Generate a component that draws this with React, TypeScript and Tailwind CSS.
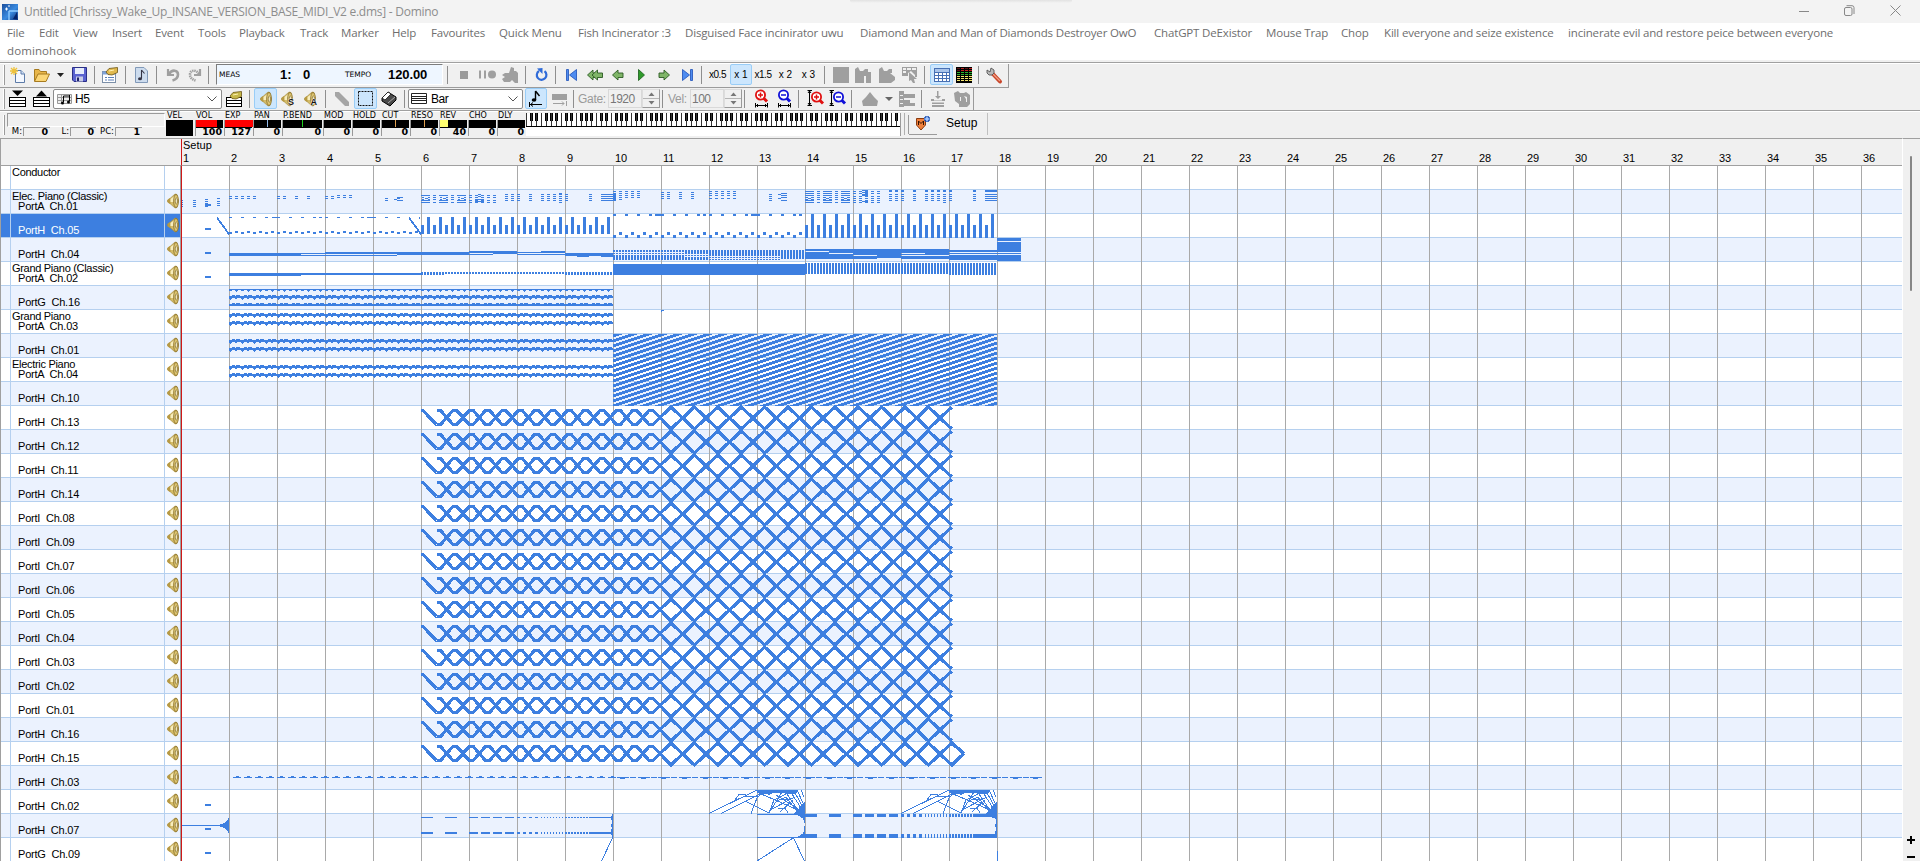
import React from "react";

type Box = [number, number, number, number];

const BLUE = "#3d7fe0";
const BAR = 48;

/* ---------- small building blocks ---------- */

const Cell = ({ c, children }: { c: string; children?: React.ReactNode }) => (
  <div className={`flex h-full shrink-0 items-center justify-center ${c}`}>{children}</div>
);

const Sep = ({ c }: { c: string }) => (
  <Cell c={c}>
    <div className="h-[18px] w-px bg-[#8e8e8e]" />
  </Cell>
);

const Hot = ({ c, children }: { c: string; children?: React.ReactNode }) => (
  <div className={`flex h-[21px] shrink-0 items-center justify-center rounded-[2px] border border-[#99cdf7] bg-[#cce6fd] ${c}`}>
    {children}
  </div>
);

const Svg = ({ w = 16, h = 16, children }: { w?: number; h?: number; children: React.ReactNode }) => (
  <svg width={w} height={h} viewBox={`0 0 ${w} ${h}`} className="block shrink-0 overflow-visible">
    {children}
  </svg>
);

const Grip = () => (
  <div className="flex h-full w-[6px] shrink-0 items-center pl-[3px]">
    <div className="h-[20px] w-[2px] border-r border-[#9b9b9b] bg-white" />
  </div>
);

const Speaker = ({ mark }: { mark?: string }) => (
  <div className="relative shrink-0">
    <Svg w={mark ? 15 : 12} h={16}>
      <path d="M0.500 7L3.500 5L8 1L10 1.500L11.500 8L10 14.500L8 15L3.500 11L0.500 9Z" fill="#d3bb68" stroke="#a08432" strokeWidth="0.600" />
      <path d="M1 6.500L3.500 5V11L1 9.500Z" fill="#b89a42" />
      <path d="M3.500 6L7.500 3V9L3.500 9Z" fill="#f8edbc" />
      <ellipse cx="9" cy="8" rx="2.400" ry="6.600" fill="#dcc470" stroke="#7d6320" strokeWidth="0.700" />
      <ellipse cx="9.300" cy="8" rx="1.100" ry="3" fill="#fff6cf" stroke="#665016" strokeWidth="0.600" />
    </Svg>
    {mark && (
      <span className="absolute top-[5px] left-[7px] font-['Liberation_Sans',sans-serif] text-[9px] leading-[12px] font-bold text-[#111] [text-shadow:0_0_1px_#fff,0_0_1px_#fff,0_0_2px_#fff]">
        {mark}
      </span>
    )}
  </div>
);

const Hand = ({ list }: { list?: boolean }) => (
  <Svg>
    {list ? (
      <g shapeRendering="crispEdges">
        <rect x="0" y="6" width="16" height="10" fill="#000" />
        <rect x="1" y="7" width="14" height="2" fill="#fff" />
        <rect x="1" y="10" width="14" height="2" fill="#fff" />
        <rect x="1" y="13" width="14" height="2" fill="#fff" />
      </g>
    ) : (
      <g>
        <rect x="0.5" y="4.5" width="13" height="11" fill="#fff" stroke="#7b8fa8" />
        <rect x="0.5" y="4.5" width="13" height="3" fill="#7ea2d8" />
        <path d="M3 10.5h2M6 10.5h6M3 13h2M6 13h6" stroke="#5a7fb8" />
      </g>
    )}
    <path d="M4 5 L7 1.5 L15.5 0.5 L15.5 5.5 L10 8 L6 7.5 Z" fill={list ? "#c6b84a" : "#e0b94e"} stroke="#6b5414" strokeWidth="0.8" />
    <path d="M7 4 L12 3" stroke="#fff0b0" />
  </Svg>
);

const ListArrow = ({ up }: { up?: boolean }) => (
  <Svg w={17} h={17}>
    <path d={up ? "M3 6.5 L8.5 0.5 L14 6.5 Z" : "M3 0.5 L8.5 6 L14 0.5 Z"} fill="#000" />
    <g shapeRendering="crispEdges">
      <rect x="0" y="7" width="17" height="10" fill="#000" />
      <rect x="1" y="8" width="15" height="2" fill="#fff" />
      <rect x="1" y="11" width="15" height="2" fill="#fff" />
      <rect x="1" y="14" width="15" height="2" fill="#fff" />
    </g>
  </Svg>
);

const Lens = ({ color, minus, vertical }: { color: string; minus?: boolean; vertical?: boolean }) => (
  <Svg w={17} h={17}>
    {vertical ? (
      <path d="M2.5 0.5V15.5M0.5 0.5H5M0.5 15.5H5M1 3L2.5 1L4 3M1 13L2.5 15L4 13" stroke="#000" fill="none" strokeWidth="1" />
    ) : (
      <path d="M2.5 13V17.5M14.5 13V17.5M3 15.5H14M5 14L3.5 15.5L5 17M12 14L13.5 15.5L12 17" stroke="#000" fill="none" strokeWidth="1" />
    )}
    <g transform={vertical ? "translate(2 1)" : "translate(0 -1)"}>
      <path d="M10.5 9L14 12.5" stroke={color} strokeWidth="3" />
      <circle cx="7.5" cy="6" r="4.6" fill="#fff" stroke={color} strokeWidth="1.8" />
      <path d={minus ? "M5 6H10" : "M5 6H10M7.5 3.5V8.5"} stroke={color} strokeWidth="1.5" />
    </g>
  </Svg>
);

const Arrow = ({ left, double }: { left?: boolean; double?: boolean }) => (
  <Svg w={double ? 16 : 12} h={12}>
    <g transform={left ? undefined : "translate(12 0) scale(-1 1)"} fill="#7fb568" stroke="#2a5a22" strokeWidth="0.9" strokeLinejoin="round">
      <path d="M0.5 6L6 1V4H11V8.5H6V11Z" />
      {double && <path d="M5 6L10.5 1V4H15.5V8.5H10.5V11Z" />}
    </g>
  </Svg>
);

const Chevron = () => (
  <Svg w={10} h={6}>
    <path d="M0.5 0.5L5 5L9.5 0.5" fill="none" stroke="#555" />
  </Svg>
);

const Spin = () => (
  <div className="flex h-[19px] w-[18px] shrink-0 flex-col border border-t-[#ddd] border-r-[#999] border-b-[#999] border-l-[#ddd] bg-[#f0f0f0]">
    <div className="flex flex-1 items-center justify-center border-b border-[#b5b5b5]">
      <Svg w={7} h={4}><path d="M0.500 4L3.500 0.500L6.500 4Z" fill="#777" /></Svg>
    </div>
    <div className="flex flex-1 items-center justify-center">
      <Svg w={7} h={4}><path d="M0.500 0L3.500 3.500L6.500 0Z" fill="#777" /></Svg>
    </div>
  </div>
);

/* ---------- title and menu ---------- */

const MENU: [string, string][] = [
  ["File", "w-[32px]"], ["Edit", "w-[34px]"], ["View", "w-[39px]"], ["Insert", "w-[43px]"], ["Event", "w-[43px]"],
  ["Tools", "w-[41px]"], ["Playback", "w-[61px]"], ["Track", "w-[41px]"], ["Marker", "w-[51px]"], ["Help", "w-[39px]"],
  ["Favourites", "w-[68px]"], ["Quick Menu", "w-[79px]"], ["Fish Incinerator :3", "w-[107px]"],
  ["Disguised Face incinirator uwu", "w-[175px]"], ["Diamond Man and Man of Diamonds Destroyer OwO", "w-[294px]"],
  ["ChatGPT DeExistor", "w-[112px]"], ["Mouse Trap", "w-[75px]"], ["Chop", "w-[43px]"],
  ["Kill everyone and seize existence", "w-[184px]"], ["incinerate evil and restore peice between everyone", "w-[270px]"],
];

const TitleBar = () => (
  <div className="flex h-[23px] w-full shrink-0 items-center bg-[#f3f3f3] font-['Open_Sans',sans-serif] text-[12px] text-[#8d8d8d]">
    <div className="ml-[2px] w-[22px]">
      <Svg>
        <defs>
          <linearGradient id="app" x1="0" y1="0" x2="1" y2="1">
            <stop offset="0" stopColor="#1c4f9c" /><stop offset="0.55" stopColor="#3a8be0" /><stop offset="1" stopColor="#0a2f78" />
          </linearGradient>
        </defs>
        <rect width="16" height="16" fill="url(#app)" />
        <path d="M7 7h9M7 7v9" stroke="#8ecbff" strokeWidth="1.4" />
        <path d="M3 5h3M4.5 3.500v3M6 2h2" stroke="#fff" />
        <path d="M11 15L15 8V15Z" fill="#04246b" />
      </Svg>
    </div>
    <div className="w-[826px] whitespace-nowrap tracking-[-0.260px]">Untitled [Chrissy_Wake_Up_INSANE_VERSION_BASE_MIDI_V2 e.dms] - Domino</div>
    <div className="h-[3px] w-[222px] self-start rounded-b-full bg-linear-to-b from-[#e2e2e2] to-[#f3f3f3]" />
    <div className="ml-auto flex items-center pr-[19px] pb-[2px]">
      <Svg w={10} h={10}><path d="M0 5.500h10" stroke="#888" /></Svg>
      <div className="w-[35px]" />
      <Svg w={11} h={11}><rect x="0.5" y="2.500" width="7.500" height="8" rx="1.500" fill="none" stroke="#888" /><path d="M2.500 0.700H8a2 2 0 0 1 2 2V9" fill="none" stroke="#888" /></Svg>
      <div className="w-[35px]" />
      <Svg w={11} h={11}><path d="M0.500 0.500L10.500 10.500M10.500 0.500L0.500 10.500" stroke="#888" /></Svg>
    </div>
  </div>
);

const MenuBar = () => (
  <div className="h-[37px] w-full shrink-0 bg-white pl-[7px] font-['Open_Sans',sans-serif] text-[11.5px] tracking-[-0.160px] text-[#6e6e6e]">
    <div className="flex h-[19px] items-center">
      {MENU.map(([t, w]) => (
        <div key={t} className={`shrink-0 whitespace-nowrap ${w}`}>{t}</div>
      ))}
    </div>
    <div className="flex h-[18px] items-center tracking-[0.1px]">dominohook</div>
  </div>
);

/* ---------- toolbars ---------- */

const Gray = ({ d }: { d: string }) => (
  <Svg><path d={d} fill="#9f9f9f" fillRule="evenodd" /></Svg>
);

const Eq = () => {
  const cells: React.ReactNode[] = [];
  const on = [5, 7, 6, 7];
  for (let c = 0; c < 4; c++)
    for (let r = 0; r < 7; r++)
      cells.push(
        <rect key={`${c}-${r}`} x={1 + c * 4} y={1 + r * 2} width="3" height="1"
          fill={r < 7 - on[c] ? "#5a1010" : r < 2 ? "#c02020" : r < 4 ? "#2fb02f" : "#f3e36a"} />
      );
  return <Svg><rect width="16" height="16" fill="#000" />{cells}</Svg>;
};

const TransportBar = () => (
  <div className="flex h-[24px] w-[1009px] shrink-0 items-center border-r border-b border-[#9b9b9b] bg-[#f0f0f0] pb-[2px] font-['Liberation_Sans',sans-serif] text-[11px] text-black">
    <Grip />
    <Cell c="w-[24px]">
      <Svg>
        <path d="M5.500 3.500H11L14.500 7V15.500H5.500Z" fill="#f4f8ff" stroke="#5c7ba8" />
        <path d="M11 3.500V7H14.500" fill="#cfe0f7" stroke="#5c7ba8" />
        <path d="M4 0V8M0 4H8M1 1L7 7M7 1L1 7" stroke="#eec23c" strokeWidth="1.300" />
      </Svg>
    </Cell>
    <Cell c="w-[24px]">
      <Svg>
        <path d="M0.500 14V2.500H5L6.500 4.500H12.500V7" fill="#e8b64a" stroke="#a77b20" />
        <path d="M0.500 14.500L4 7H15.500L12 14.500Z" fill="#fbd676" stroke="#a77b20" />
      </Svg>
    </Cell>
    <Cell c="w-[13px]"><Svg w={7} h={4}><path d="M0 0H7L3.500 4Z" fill="#222" /></Svg></Cell>
    <Cell c="w-[24px]">
      <Svg w={15} h={15}>
        <path d="M0.500 0.500H14.500V14.500H2L0.500 13Z" fill="#5a62d0" stroke="#2a2f86" />
        <rect x="3" y="1" width="9" height="6" fill="#e6ecfb" />
        <rect x="4" y="9.500" width="7" height="5" fill="#c8cce6" />
        <rect x="5" y="10.500" width="2" height="3.500" fill="#20246c" />
      </Svg>
    </Cell>
    <Sep c="w-[7px]" />
    <Cell c="w-[24px]"><Hand /></Cell>
    <Sep c="w-[6px]" />
    <Cell c="w-[26px]">
      <Svg w={13} h={16}>
        <path d="M0.500 0.500H9L12.500 4V15.500H0.500Z" fill="#cddcee" stroke="#8199b8" />
        <path d="M6.500 3V11.500M6.500 3L9.500 6.500" stroke="#334" strokeWidth="1.100" />
        <ellipse cx="5" cy="11.800" rx="2" ry="1.500" fill="#334" />
      </Svg>
    </Cell>
    <Sep c="w-[4px]" />
    <Cell c="w-[30px]">
      <Svg w={13} h={14}><path d="M1 1V7H7" fill="none" stroke="#9f9f9f" strokeWidth="2.200" /><path d="M2 6C5 1 11 2 11 6.500C11 9.500 9 11.500 5.500 12.500" fill="none" stroke="#9f9f9f" strokeWidth="2.600" /></Svg>
    </Cell>
    <Cell c="w-[12px]">
      <Svg w={13} h={14}><g transform="translate(13 0) scale(-1 1)"><path d="M1 1V7H7" fill="none" stroke="#9f9f9f" strokeWidth="2.200" /><path d="M2 6C5 1 11 2 11 6.500C11 9.500 9 11.500 5.500 12.500" fill="none" stroke="#9f9f9f" strokeWidth="2.600" strokeDasharray="1.500 0.700" /></g></Svg>
    </Cell>
    <Sep c="w-[16px]" />
    <div className="flex h-[21px] w-[227px] shrink-0 items-center border border-t-[#7d7d7d] border-r-white border-b-white border-l-[#7d7d7d] bg-[#eef6ff] text-[13px] font-bold">
      <div className="w-[60px] pl-[2px] font-['DejaVu_Sans',sans-serif] text-[7.5px] font-normal">MEAS</div>
      <div className="w-[26px] pl-[3px]">1:</div>
      <div className="w-[42px]">0</div>
      <div className="w-[43px] font-['DejaVu_Sans',sans-serif] text-[7.5px] font-normal">TEMPO</div>
      <div className="tracking-[-0.1px]">120.00</div>
    </div>
    <Sep c="w-[9px]" />
    <Cell c="w-[24px]"><div className="size-[8px] bg-[#9a9a9a]" /></Cell>
    <Cell c="w-[22px]"><Svg w={17} h={9}><path d="M0 0.500H2V8.500H0ZM5 0.500H7V8.500H5Z" fill="#9f9f9f" /><circle cx="13" cy="4.500" r="4" fill="#9f9f9f" /></Svg></Cell>
    <Cell c="w-[24px]"><Gray d="M9 0L12 1V4H14L16 6V16H13L10 13L8 15H2L0 12L3 10L0 8L3 6H7Z" /></Cell>
    <Sep c="w-[7px]" />
    <Cell c="w-[24px]">
      <Svg w={13} h={13}><path d="M9.500 3.200A4.800 4.800 0 1 1 4 3" fill="none" stroke="#2f6bd8" strokeWidth="2.200" /><path d="M7 0V6L1.500 0.500Z" fill="#2f6bd8" transform="translate(0.500 0)" /></Svg>
    </Cell>
    <Sep c="w-[5px]" />
    <Cell c="w-[26px]"><Svg w={11} h={12}><path d="M0.500 0.500H2.500V11.500H0.500ZM10.500 0.500V11.500L3.500 6Z" fill="#4f8cf0" stroke="#1d4fb8" strokeWidth="0.800" /></Svg></Cell>
    <Cell c="w-[22px]"><Arrow left double /></Cell>
    <Cell c="w-[24px]"><Arrow left /></Cell>
    <Cell c="w-[22px]"><Svg w={7} h={12}><path d="M0.500 0.500L6.500 6L0.500 11.500Z" fill="#2f9a2a" stroke="#175a18" strokeWidth="0.800" /></Svg></Cell>
    <Cell c="w-[24px]"><Arrow /></Cell>
    <Cell c="w-[22px]"><Svg w={11} h={12}><path d="M8.500 0.500H10.500V11.500H8.500ZM0.500 0.500V11.500L7.500 6Z" fill="#4f8cf0" stroke="#1d4fb8" strokeWidth="0.800" /></Svg></Cell>
    <Sep c="w-[7px]" />
    <Cell c="w-[25px] text-[10px] tracking-[-0.500px]">x0.5</Cell>
    <Hot c="w-[22px] text-[10px]">x 1</Hot>
    <Cell c="w-[22px] text-[10px] tracking-[-0.500px]">x1.5</Cell>
    <Cell c="w-[23px] text-[10px]">x 2</Cell>
    <Cell c="w-[23px] text-[10px]">x 3</Cell>
    <Sep c="w-[8px]" />
    <Cell c="w-[26px]"><Gray d="M0 0H16V16H0Z" /></Cell>
    <Cell c="w-[18px]"><Gray d="M0 2L3 0L5 4H8L10 2H13V5H16V16H11V9H9V16H0Z" /></Cell>
    <Cell c="w-[30px]"><Gray d="M0 2L3 0L5 4H8L10 2H13V6H11L16 10V13L12 16H0Z" /></Cell>
    <Cell c="w-[16px]"><Gray d="M0 0H15V10H13V8L9 4L6 6V9H0ZM1 1V3H4V1ZM5 1V3H9V1ZM10 1V3H14V1ZM1 4V6H4V4ZM7 5L15 12L12 12L13 16L11 16L9 13L7 14Z" /></Cell>
    <Sep c="w-[12px]" />
    <Hot c="w-[23px]">
      <Svg w={16} h={14}>
        <rect x="0.500" y="0.500" width="15" height="13" fill="#fff" stroke="#4770b4" />
        <rect x="1" y="1" width="14" height="3" fill="#a9c4ea" />
        <path d="M1 4.500H15M1 7.500H15M1 10.500H15M4.500 4V13M8.500 4V13M12.500 4V13" stroke="#4770b4" />
      </Svg>
    </Hot>
    <Cell c="w-[22px]"><Eq /></Cell>
    <Sep c="w-[7px]" />
    <Cell c="w-[24px]">
      <Svg>
        <path d="M6 6L14 14.500" stroke="#c8452a" strokeWidth="4" strokeLinecap="round" />
        <path d="M7 7L14 14" stroke="#f2a084" strokeWidth="1.200" />
        <path d="M1 3L4 5L5 1L8 3L8 6L6 8L3 8L1 6Z" fill="#b9b9b9" stroke="#555" strokeWidth="0.900" />
      </Svg>
    </Cell>
  </div>
);

const EditBar = () => (
  <div className="flex h-[22px] w-[974px] shrink-0 items-center border-r border-[#9b9b9b] bg-[#f0f0f0] pb-px font-['Liberation_Sans',sans-serif] text-[12px] text-black">
    <Grip />
    <Cell c="w-[23px]"><ListArrow /></Cell>
    <Cell c="w-[24px]"><ListArrow up /></Cell>
    <div className="flex h-[20px] w-[169px] shrink-0 items-center rounded-[2px] border border-[#8c8c8c] bg-white pr-[4px] pl-[3px]">
      <Svg w={15} h={12}>
        <path d="M0.500 1.500H14.500V10.500H0.500ZM0 4.500H15M0 7.500H15M4.500 1V11" fill="#eee" stroke="#999" />
        <path d="M6.500 3V9M12.500 2V8M6.500 3H12.500" stroke="#000" fill="none" /><circle cx="5.500" cy="10" r="1.500" /><circle cx="11.500" cy="9" r="1.500" />
      </Svg>
      <div className="flex-1 pl-[3px] tracking-[-0.300px]">H5</div>
      <Chevron />
    </div>
    <Cell c="w-[24px]"><Hand list /></Cell>
    <Sep c="mr-[2px] w-[6px]" />
    <Hot c="w-[23px]"><Speaker /></Hot>
    <Cell c="w-[23px]"><Speaker mark="S" /></Cell>
    <Cell c="w-[22px]"><Speaker mark="A" /></Cell>
    <Sep c="w-[7px]" />
    <Cell c="w-[25px]"><Svg w={14} h={14}><path d="M0 0L4 0L14 10V14H10L0 4Z" fill="#a5a5a5" /></Svg></Cell>
    <Hot c="w-[23px]"><Svg w={15} h={15}><rect x="0.500" y="0.500" width="14" height="14" fill="none" stroke="#111" strokeDasharray="2 1" /></Svg></Hot>
    <Cell c="w-[24px]">
      <Svg>
        <path d="M1 7L7 1L15 6L15 9L9 15L1 10Z" fill="#4a4a4a" stroke="#000" />
        <path d="M1 7L7 1L10 3L4 9Z" fill="#fff" stroke="#000" strokeWidth="0.700" />
        <path d="M7 12L14 6" stroke="#aaa" strokeWidth="1" />
      </Svg>
    </Cell>
    <Sep c="mr-px w-[6px]" />
    <div className="flex h-[20px] w-[115px] shrink-0 items-center rounded-[2px] border border-[#8c8c8c] bg-white pr-[4px] pl-[2px]">
      <Svg w={16} h={11}><path d="M0.500 0.500H15.500V10.500H0.500ZM0 3.500H16M0 5.500H16M0 7.500H16" fill="#fff" stroke="#222" /></Svg>
      <div className="flex-1 pl-[4px] tracking-[-0.500px]">Bar</div>
      <Chevron />
    </div>
    <Hot c="ml-[2px] w-[22px]">
      <Svg w={14} h={16}><path d="M6.500 0V9M6.500 0L10.500 5" stroke="#000" strokeWidth="1.400" /><ellipse cx="5" cy="9" rx="2.300" ry="1.800" /><path d="M0.500 11V16M1 13.500H13M4 11.500L1.500 13.500L4 15.500" stroke="#000" fill="none" /></Svg>
    </Hot>
    <Cell c="w-[24px]"><Svg w={15} h={14}><path d="M0 2H15V8H0Z" fill="#9f9f9f" /><path d="M1 11.500H12M14.500 9V14M10 9.500L12 11.500L10 13.500" stroke="#9f9f9f" fill="none" /></Svg></Cell>
    <Sep c="w-[4px]" />
    <div className="w-[33px] shrink-0 pl-[3px] tracking-[-0.300px] text-[#9a9a9a]">Gate:</div>
    <div className="flex h-[19px] w-[34px] shrink-0 items-center border border-[#d9d9d9] pl-[1px] tracking-[-0.500px] text-[#777]">1920</div>
    <Spin />
    <Sep c="w-[5px]" />
    <div className="w-[25px] shrink-0 pl-[3px] tracking-[-0.300px] text-[#9a9a9a]">Vel:</div>
    <div className="flex h-[19px] w-[34px] shrink-0 items-center border border-[#d9d9d9] pl-[1px] tracking-[-0.500px] text-[#777]">100</div>
    <Spin />
    <Sep c="w-[5px]" />
    <Cell c="w-[28px]"><Lens color="#e01010" /></Cell>
    <Cell c="w-[18px]"><Lens color="#1010d8" minus /></Cell>
    <Sep c="w-[10px]" />
    <Cell c="w-[24px]"><Lens color="#e01010" vertical /></Cell>
    <Cell c="w-[20px]"><Lens color="#1010d8" minus vertical /></Cell>
    <Sep c="w-[9px]" />
    <Cell c="w-[28px]"><Svg w={16} h={14}><path d="M8 0L12 5L16 9L15 14H1L0 9L4 5Z" fill="#9f9f9f" /></Svg></Cell>
    <Cell c="w-[10px]"><Svg w={8} h={4}><path d="M0 0H8L4 4Z" fill="#666" /></Svg></Cell>
    <Cell c="w-[26px]"><Svg><path d="M0 0H5V3H16V7H5V9H11V12H16V15H5V16H0ZM1 4V5H4V4ZM1 8V9H4V8ZM1 12V13H4V12Z" fill="#9f9f9f" fillRule="evenodd" /></Svg></Cell>
    <Sep c="w-[3px]" />
    <Cell c="w-[30px]"><Svg w={14} h={16}><path d="M6 0H7.500V5H10L7 8L4 5H6ZM0 8H3V9.500H11V8H14V10H0ZM1 11.500H13V13H1ZM1 14H13V16H1Z" fill="#9f9f9f" /></Svg></Cell>
    <Cell c="w-[18px]"><Gray d="M0 2L4 0L6 2H10L12 1L16 4V13L13 16H5V13L1 10ZM6 6V10H7V6ZM10 5L12 8V11H13V6Z" /></Cell>
  </div>
);

type Ctl = { name: string; w: string; value?: string; fill?: string };
const CONTROLS: Ctl[] = [
  { name: "VOL", w: "w-[29px]", value: "100", fill: "left-0 w-[21px] bg-[#ff0000]" },
  { name: "EXP", w: "w-[29px]", value: "127", fill: "left-0 w-[28px] bg-[#ff0000]" },
  { name: "PAN", w: "w-[29px]", value: "0", fill: "left-[13px] w-px bg-[#8fb8e8]" },
  { name: "P.BEND", w: "w-[41px]", value: "0", fill: "left-[19px] w-px bg-[#20d020]" },
  { name: "MOD", w: "w-[29px]", value: "0" },
  { name: "HOLD", w: "w-[29px]", value: "0" },
  { name: "CUT", w: "w-[29px]", value: "0", fill: "left-[13px] w-px bg-[#e0a050]" },
  { name: "RESO", w: "w-[29px]", value: "0", fill: "left-[13px] w-px bg-[#e0a050]" },
  { name: "REV", w: "w-[29px]", value: "40", fill: "left-0 w-[8px] bg-[#ffff70]" },
  { name: "CHO", w: "w-[29px]", value: "0" },
  { name: "DLY", w: "w-[29px]", value: "0" },
];

const Piano = () => {
  const nodes: React.ReactNode[] = [];
  for (let i = 0; i < 75; i++) {
    nodes.push(<rect key={`w${i}`} x={i * 5} y="0" width="1" height="13" fill="#333" />);
    if ([0, 1, 3, 4, 5].includes(i % 7) && i < 74)
      nodes.push(<rect key={`b${i}`} x={i * 5 + 4} y="0" width="3" height="8" fill="#000" />);
  }
  return (
    <svg width="375" height="23" className="block" shapeRendering="crispEdges">
      <rect width="375" height="23" fill="#fff" />
      {nodes}
      <rect x="0" y="13" width="375" height="1" fill="#000" />
      <rect x="374" y="0" width="1" height="23" fill="#9b9b9b" />
    </svg>
  );
};

const Field = ({ label, value, lw, w }: { label: string; value: string; lw: string; w: string }) => (
  <>
    <div className={`shrink-0 text-right font-['DejaVu_Sans',sans-serif] text-[8.5px] leading-[9px] ${lw}`}>{label}</div>
    <div className={`flex h-[9px] shrink-0 items-center justify-end border-t border-l border-[#999] pr-[2px] font-['DejaVu_Sans',sans-serif] text-[9.5px] font-bold ${w}`}>
      <span className="leading-[8px]">{value}</span>
    </div>
  </>
);

const StatusBar = () => (
  <div className="flex h-[24px] w-full shrink-0 bg-[#f0f0f0] pt-px text-black">
    <Grip />
    <div className="ml-px w-[159px] shrink-0">
      <div className="h-[14px] w-[158px] border border-[#9b9b9b] border-r-white border-b-white" />
      <div className="flex h-[9px] items-center">
        <Field label="M:" value="0" lw="w-[15px] mr-[1px]" w="w-[27px]" />
        <Field label="L:" value="0" lw="w-[19px] mr-[1px]" w="w-[26px]" />
        <Field label="PC:" value="1" lw="w-[18px] mr-[1px]" w="w-[27px]" />
      </div>
    </div>
    <div className="w-[29px] shrink-0 font-['DejaVu_Sans',sans-serif] text-[8px] leading-[6px]">
      <div className="h-[7px] pl-px">VEL</div>
      <div className="h-[16px] w-[27px] bg-black" />
    </div>
    {CONTROLS.map((c) => (
      <div key={c.name} className={`shrink-0 pr-px font-['DejaVu_Sans',sans-serif] ${c.w}`}>
        <div className="h-[7px] pl-px text-[8px] leading-[6px]">{c.name}</div>
        <div className="relative h-[8px] w-full border-l border-[#999] bg-black">
          {c.fill && <div className={`absolute top-0 h-[7px] ${c.fill}`} />}
        </div>
        <div className="flex h-[8px] items-center justify-end border-l border-[#999] pr-[1px] text-[9.5px] font-bold">
          <span className="leading-[8px]">{c.value}</span>
        </div>
      </div>
    ))}
    <div className="w-[378px] shrink-0"><Piano /></div>
    <div className="flex h-[22px] items-center border-r border-l border-r-[#c0c0c0] border-l-[#b0b0b0] pr-[10px] font-['Liberation_Sans',sans-serif] text-[12px]">
      <div className="h-[19px] w-[4px] border-r border-[#9b9b9b]" />
      <div className="flex h-[21px] w-[28px] items-center justify-center border-b border-[#9b9b9b] pb-px">
        <Svg w={15} h={16}>
          <path d="M0.500 3.500H9.500V10L5 15L0.500 10Z" fill="#f0803c" stroke="#8a3a10" />
          <path d="M2.500 10V6L5 8.500L7.500 6V10" fill="none" stroke="#301000" />
          <path d="M11 1V7M8 4H14" stroke="#1f4fb0" strokeWidth="3.600" /><path d="M11 1.500V6.500M8.500 4H13.500" stroke="#a9cbff" strokeWidth="1.600" />
        </Svg>
      </div>
      <div className="pb-[3px] pl-[9px] leading-[14px]">Setup</div>
    </div>
  </div>
);

/* ---------- tracks ---------- */

const TRACKS: [string, string][] = [
  ["Conductor", ""], ["Elec. Piano (Classic)", "PortA  Ch.01"], ["", "PortH  Ch.05"], ["", "PortH  Ch.04"],
  ["Grand Piano (Classic)", "PortA  Ch.02"], ["", "PortG  Ch.16"], ["Grand Piano", "PortA  Ch.03"], ["", "PortH  Ch.01"],
  ["Electric Piano", "PortA  Ch.04"], ["", "PortH  Ch.10"], ["", "PortH  Ch.13"], ["", "PortH  Ch.12"], ["", "PortH  Ch.11"],
  ["", "PortH  Ch.14"], ["", "PortI  Ch.08"], ["", "PortI  Ch.09"], ["", "PortI  Ch.07"], ["", "PortI  Ch.06"], ["", "PortI  Ch.05"],
  ["", "PortI  Ch.04"], ["", "PortI  Ch.03"], ["", "PortI  Ch.02"], ["", "PortI  Ch.01"], ["", "PortH  Ch.16"], ["", "PortH  Ch.15"],
  ["", "PortH  Ch.03"], ["", "PortH  Ch.02"], ["", "PortH  Ch.07"], ["", "PortG  Ch.09"],
];

const TrackList = () => (
  <div className="flex w-[181px] shrink-0 flex-col border-r border-l border-[#a0a0a0]">
    {TRACKS.map(([name, port], i) => {
      const selected = i === 2;
      const tone = selected ? "bg-[#3d7fe0] text-white" : i % 2 ? "bg-[#ebf2fe] text-black" : "bg-white text-black";
      return (
        <div key={port + name} className={`flex h-[24px] shrink-0 border-b border-[#b5d0ef] font-['Liberation_Sans',sans-serif] text-[11px] ${tone}`}>
          <div className="w-[10px] shrink-0 border-r border-[#b5d0ef]" />
          <div className="flex w-[154px] shrink-0 flex-col border-r border-[#b5d0ef] pl-[1px] whitespace-pre">
            <div className="h-[11px] leading-[12px] tracking-[-0.300px]">{name}</div>
            <div className="h-[10px] pl-[6px] leading-[11px] tracking-[-0.200px]">{port}</div>
          </div>
          {i > 0 && <div className="pt-[3px] pl-[2px]"><Speaker /></div>}
        </div>
      );
    })}
  </div>
);

/* ---------- note overview ---------- */

function buildNotes(): Box[] {
  const r: Box[] = [];
  const add = (x: number, y: number, w: number, h: number) => r.push([x, y, w, h]);
  const chord = (xs: number[], ys: number[], w = 3) => xs.forEach((x) => ys.forEach((y) => add(x, y, w, 1)));
  const ticks = (x0: number, x1: number, y: number, h: number, w = 2, step = 3) => {
    for (let x = x0; x < x1; x += step) add(x, y, w, h);
  };

  // electric piano
  chord([193], [200, 202, 204, 206]);
  chord([181], [200, 202, 204, 206], 2);
  chord([205], [199, 201]); add(205, 203, 3, 4); add(205, 204, 6, 2);
  chord([217], [198, 201, 203, 205]);
  chord([229, 235, 241, 247, 253, 277, 283, 295, 307, 325, 331], [196, 198]);
  chord([337, 343, 349], [195, 197]);
  chord([385], [198, 200]); chord([394], [199]); chord([397], [197, 200], 6); chord([397], [198]);
  chord([421, 439, 457], [195, 200, 202], 9); chord([422, 428, 440, 446, 458, 464], [197, 199], 2); chord([425, 443, 461], [198], 3);
  chord([433, 451], [195, 197, 199, 202]);
  chord([469, 475, 481, 487, 493], [195, 197, 200, 202]); chord([475], [199, 201], 9); chord([478], [194, 196]);
  chord([505, 511, 517, 529, 541, 547, 553, 559, 565, 589], [194, 196, 198, 200]); chord([559], [193, 202]);
  chord([601], [194, 196, 198, 200], 15);
  chord([613, 619, 625, 631, 637], [191, 193, 195, 197]); chord([613, 619], [199]);
  chord([661, 667, 679, 691], [192, 194, 196, 198]); chord([709, 715, 721, 727, 733], [191, 193, 195, 198]);
  chord([769], [194, 196, 198, 200]); chord([778], [194, 198]); chord([781], [193, 195, 197, 200], 6);
  chord([805, 823, 841], [191, 193, 195, 200, 202], 9); chord([805, 811, 823, 829, 841, 847], [197, 199]); chord([808, 826, 844], [198]);
  chord([817, 835], [191, 193, 195, 197, 199, 202]);
  chord([853, 859, 865, 871, 877], [191, 193, 196, 198, 200, 202]); chord([862], [190, 192, 194, 195, 201], 6);
  chord([889, 895, 901, 913, 925, 931, 937, 943, 949, 973], [190, 191, 194, 196, 198, 200]); chord([943], [202]);
  chord([985], [190, 191, 194, 196, 198, 200], 12);

  // preset markers
  [214, 238, 262, 790, 814, 838].forEach((t) => add(205, t + 14, 6, 2));

  // selected track
  for (let i = 0; i < 12; i++) { add(217 + i, Math.round(217 + i * 1.35), 1, 3); add(409 + i, Math.round(217 + i * 1.35), 1, 3); }
  [229, 241, 253, 265, 289, 301, 313, 325, 337, 349, 361, 385, 397].forEach((x) => add(x, 217, 3, 1));
  add(272, 217, 8, 1); add(319, 217, 3, 1); add(367, 217, 9, 1); add(419, 217, 1, 2);
  for (let x = 229, k = 0; x < 420; x += 6, k++) add(x, k % 2 ? 231 : 232, 3, 2);
  for (let k = 0; k < 16; k++) {
    add(421 + 12 * k, 225, 3, 9); add(427 + 12 * k, 217, 3, 17);
    add(613 + 12 * k, 235, 3, 3); add(619 + 12 * k, 232, 3, 3);
    add(805 + 12 * k, 225, 3, 13); add(811 + 12 * k, 214, 3, 24);
  }
  [613, 625, 637, 649, 673, 685, 697, 703, 709, 721, 733, 745, 769, 781, 793, 799].forEach((x) => add(x, 214, 3, 2));
  add(655, 214, 9, 2); add(751, 214, 9, 2);

  // bass line
  add(229, 253, 72, 3); add(301, 253, 24, 1); add(301, 255, 96, 1); add(325, 252, 72, 2); add(397, 252, 72, 3);
  add(469, 251, 48, 2); add(469, 254, 24, 1); add(493, 251, 24, 3); add(517, 252, 24, 1); add(517, 254, 48, 1); add(541, 251, 24, 2);
  add(565, 253, 48, 3); add(577, 256, 12, 1); add(601, 256, 12, 1);
  ticks(613, 685, 250, 2); ticks(613, 685, 253, 1); ticks(613, 685, 255, 5);
  ticks(685, 709, 250, 4); ticks(685, 709, 255, 1); ticks(685, 709, 257, 3);
  ticks(709, 781, 250, 6); ticks(709, 781, 257, 1); ticks(709, 781, 259, 1);
  ticks(781, 805, 250, 9);
  add(805, 249, 24, 2); add(805, 252, 24, 7); add(829, 249, 24, 4); add(829, 254, 24, 5); add(853, 249, 24, 6); add(853, 256, 24, 3);
  add(877, 249, 24, 9); add(901, 249, 24, 4); add(901, 254, 24, 1); add(925, 249, 24, 6); add(901, 256, 48, 3);
  add(949, 250, 48, 2); add(949, 253, 48, 1); add(949, 255, 48, 5);
  add(997, 238, 24, 3); add(997, 242, 24, 10); add(997, 253, 24, 1); add(997, 255, 24, 6);

  // grand piano
  add(229, 273, 72, 3); add(301, 273, 120, 2); ticks(421, 445, 272, 3); ticks(445, 565, 272, 2); ticks(565, 613, 272, 3);
  add(613, 264, 192, 11); ticks(805, 949, 263, 11); ticks(949, 997, 263, 12);

  // rippling chords
  const ripple = (y: number) => {
    for (let x = 229; x < 613; x += 12) {
      add(x, y + 1, 12, 2);
      add(x + 3, y, 3, 1); add(x + 7, y, 4, 1);
      add(x, y + 3, 3, 1); add(x + 1, y + 4, 1, 1); add(x + 6, y + 3, 2, 1);
    }
  };
  add(229, 289, 384, 1);
  for (let x = 229; x < 613; x += 12) {
    add(x, 290, 3, 1); add(x + 6, 290, 3, 1); add(x + 7, 291, 1, 1);
    add(x + 3, 303, 3, 1); add(x + 7, 303, 4, 1);
  }
  add(229, 304, 384, 2);
  [295, 313, 321, 339, 347, 365, 373].forEach(ripple);
  add(661, 310, 3, 1); add(661, 311, 1, 1);

  // stepped diagonals
  for (let y = 334; y < 406; y++) {
    const off = (((334 - y) * 3) % 15 + 15) % 15;
    for (let x = 613 - 15 + off; x < 997; x += 15) {
      const a = Math.max(613, x), b = Math.min(997, x + 9);
      if (b > a) add(a, y, b - a, 1);
    }
  }

  // drum dashes
  for (let x = 233; x < 612; x += 11.04) { const q = Math.round(x); add(q, 777, 8, 1); add(q + 3, 776, 3, 1); }
  for (let x = 617; x < 1040; x += 20.67) {
    const q = Math.round(x);
    add(q, 777, 12, 1); add(q + 3, 778, 5, 1);
    if (q < 1028) add(q + 13, 777, 6, 1);
  }

  // accelerating pulses
  const pulse = (x: number, y: number, h: number) => {
    add(x, y, 12, h); add(x + 24, y, 12, h);
    [48, 60, 72, 84].forEach((d) => add(x + d, y, 9, h));
    [96, 102, 108, 114].forEach((d) => add(x + d, y, 3, h));
    ticks(x + 120, x + 144, y, h, 1); ticks(x + 144, x + 168, y, h, 2);
    add(x + 168, y, 24, h);
  };
  pulse(421, 817, 1); pulse(421, 832, 2); pulse(805, 814, 3); pulse(805, 834, 4);
  add(612, 814, 1, 24); add(611, 816, 1, 4); add(611, 829, 1, 6); add(611, 824, 1, 3);
  add(996, 803, 1, 35); add(995, 807, 1, 12); add(994, 811, 1, 7); add(995, 831, 1, 6); add(995, 824, 1, 3); add(992, 813, 3, 5);
  add(182, 825, 38, 1);
  [1, 1, 3, 3, 3, 5, 5, 7, 9, 11, 15].forEach((h, i) => add(218 + i, 825 - (h - 1) / 2, 1, h));
  add(757, 814, 48, 1); add(757, 837, 48, 1);
  [1, 2, 2, 3, 4, 4, 6, 12].forEach((h, i) => { add(797 + i, 813, 1, h + 1 > 8 ? 10 : h + 1); add(797 + i, 838 - h, 1, h); });
  add(804, 803, 1, 11); add(803, 807, 1, 8); add(802, 810, 1, 5);
  add(997, 851, 1, 10);
  return r;
}

const NOTES = buildNotes();

const crossPaths = (row: number) => {
  const t = 166 + row * 24;
  const lo = t + 4.5, hi = t + 18.5, mid = t + 11.5;
  const a: [number, number][] = [[421, lo], [423, lo]];
  const b: [number, number][] = [];
  for (let k = 0; k < 14; k++) {
    const x = 438.5 + 16.35 * k;
    const ya = k % 2 ? lo : hi, yb = k % 2 ? hi : lo;
    a.push([x - 2, ya], [x + 2, ya]);
    b.push([x - 2, yb], [x + 2, yb]);
  }
  a.push([660, mid]); b.push([660, mid]);
  for (let k = 0; k < 13; k++) {
    const x = 671 + 23.4 * k;
    const up = t + 1, down = t + 23;
    a.push([x, k % 2 ? up : down]); b.push([x, k % 2 ? down : up]);
  }
  if (row === 24) { a.push([964, mid]); b.push([964, mid]); }
  return [a, b].map((p) => p.map((q) => q.join(",")).join(" "));
};

const Burst = ({ dx }: { dx: number }) => (
  <g transform={`translate(${dx} 0)`} fill="none" stroke={BLUE} strokeWidth="1">
    <path d="M709 813.500L756 790.500H797M721 813.500L765 791.500L770 795M735 800L739 794.500H746M743 797L758 796M745 801L769 813L782 792M751 813.500L757 798L764 791M769 813L774 800L790 792M757 792L800 811M761 794L789 806L804 813M770 810L795 797M776 795L803 812M777 801L786 797L792 805L797 811M780 812L793 800M785 791L800 813M790 791L803 811M794 791L804 809M797 790L804 805M801 790L804 797M778 808H785L788 813M779 799H789" />
    <path d="M757 791.500H797" strokeWidth="2" />
    <path d="M762 793.500H772M785 793.500H796" />
    <path d="M795 813.500L804 803V814Z" fill={BLUE} />
  </g>
);

const Overview = () => {
  const bars: React.ReactNode[] = [];
  for (let n = 2; n <= 36; n++) bars.push(<rect key={n} x={181 + BAR * (n - 1)} y={166} width={1} height={695} fill="#a9a9a9" />);
  return (
    <svg width="1721" height="695" viewBox="181 166 1721 695" className="block shrink-0" shapeRendering="crispEdges">
      {TRACKS.map((_, i) => (
        <g key={i}>
          <rect x={181} y={166 + 24 * i} width={1721} height={23} fill={i % 2 ? "#ebf2fe" : "#ffffff"} />
          <rect x={181} y={189 + 24 * i} width={1721} height={1} fill="#b5d0ef" />
        </g>
      ))}
      {bars}
      <g fill={BLUE}>
        {NOTES.map(([x, y, w, h], i) => <rect key={i} x={x} y={y} width={w} height={h} />)}
      </g>
      {Array.from({ length: 15 }, (_, i) => crossPaths(10 + i)).flat().map((p, i) => (
        <polyline key={i} points={p} fill="none" stroke={BLUE} strokeWidth="3.300" />
      ))}
      <Burst dx={0} />
      <Burst dx={192} />
      <path d="M601.500 861L612.500 838M757 861L793 838M793.500 838L804.500 861" fill="none" stroke={BLUE} />
      <rect x={181} y={166} width={1} height={695} fill="#d01818" />
    </svg>
  );
};

const Ruler = () => (
  <div className="flex h-[28px] shrink-0 border-t border-l border-[#a0a0a0] bg-[#f0f0f0] font-['Liberation_Sans',sans-serif] text-[11px] text-black">
    <div className="w-[180px] shrink-0 border-b border-[#a0a0a0]" />
    <div className="w-[1721px] shrink-0 overflow-hidden border-b border-l border-b-[#a0a0a0] border-l-[#d01818]">
      <div className="h-[12px] pl-[1px] leading-[13px]">Setup</div>
      <div className="flex h-[14px]">
        {Array.from({ length: 36 }, (_, i) => (
          <div key={i} className="w-[48px] shrink-0 pl-[1px] leading-[14px]">{i + 1}</div>
        ))}
      </div>
    </div>
    <div className="w-px shrink-0 bg-white" />
  </div>
);

export default function App() {
  return (
    <div className="flex h-[861px] w-[1920px] flex-col overflow-hidden bg-[#f0f0f0]">
      <TitleBar />
      <MenuBar />
      <div className="h-[4px] shrink-0 border-b border-white pt-[2px]"><div className="h-px bg-[#a0a0a0]" /></div>
      <TransportBar />
      <EditBar />
      <div className="h-[2px] shrink-0 border-t border-b border-t-[#a0a0a0] border-b-white" />
      <StatusBar />
      <div className="h-[2px] shrink-0 bg-[#f0f0f0]" />
      <div className="flex min-h-0 flex-1">
        <div className="flex w-[1902px] shrink-0 flex-col">
          <Ruler />
          <div className="flex shrink-0">
            <TrackList />
            <Overview />
          </div>
        </div>
        <div className="flex flex-1 flex-col items-center border-t border-l border-t-[#a0a0a0] border-l-white bg-[#f0f0f0] pr-[2px]">
          <div className="mt-[17px] h-[135px] w-[2px] rounded-full bg-[#868686]" />
          <div className="mt-auto flex h-[29px] w-full flex-col items-center pt-[4px]">
            <Svg w={8} h={8}><path d="M0 4H8M4 0V8" stroke="#000" strokeWidth="2" /></Svg>
            <div className="mt-[12px] h-[2px] w-[8px] bg-black" />
          </div>
        </div>
      </div>
    </div>
  );
}
